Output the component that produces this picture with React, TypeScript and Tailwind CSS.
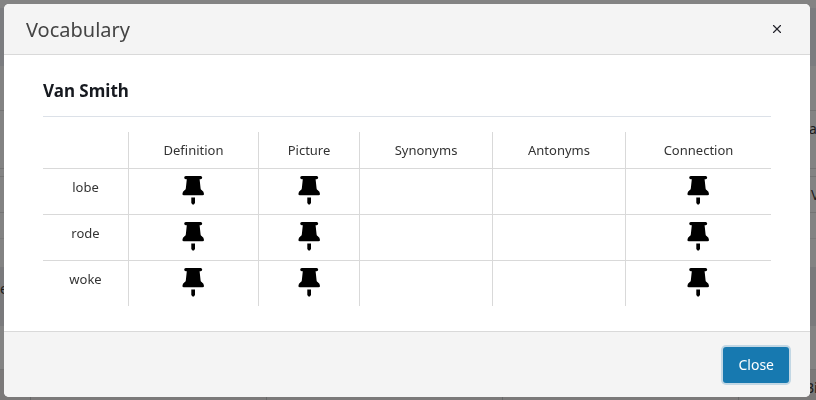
import { X } from 'lucide-react'

interface VocabularyRow {
  word: string
  pins: boolean[]
}

const columns = [
  { label: 'Definition', width: 'w-[130px]' },
  { label: 'Picture', width: 'w-[101px]' },
  { label: 'Synonyms', width: 'w-[133px]' },
  { label: 'Antonyms', width: 'w-[133px]' },
  { label: 'Connection', width: 'w-[145px]' },
]

const rows: VocabularyRow[] = [
  { word: 'lobe', pins: [true, true, false, false, true] },
  { word: 'rode', pins: [true, true, false, false, true] },
  { word: 'woke', pins: [true, true, false, false, true] },
]

function PinIcon() {
  return (
    <svg viewBox="0 0 23 30" className="mx-auto h-[30px] w-[23px] text-black" fill="currentColor" role="img" aria-label="Pinned">
      <path d="M3.800 1h14.800q1.600 0 1.600 1.600t-1.600 1.600h-1l1 9.200q.1 1 1 1.500 2.400 1.500 2.400 4.100 0 1.300-1.500 1.300H1.900q-1.500 0-1.500-1.300 0-2.600 2.400-4.100.9-.5 1-1.500l1-9.200h-1q-1.600 0-1.600-1.600T3.800 1z" />
      <path d="M9.300 22.400h3.700v5.200q-.3 2.100-1.850 2.100t-1.850-2.100z" />
    </svg>
  )
}

// The page that stays dimmed behind the dialog
function PageBehind() {
  return (
    <div className="flex h-screen flex-col overflow-hidden bg-[#838383] text-sm leading-5 text-[#1c1c1c]" aria-hidden="true">
      <div className="h-2 shrink-0" />
      <div className="h-[58px] shrink-0 bg-[#7b7c7f]" />
      <div className="h-[45px] shrink-0 border-b border-[#747474]" />
      <div className="flex h-[58px] shrink-0 items-start justify-end border-b border-[#747474] pt-2">
        <span className="w-[7px]">a</span>
      </div>
      <div className="mt-[7px] flex h-[37px] shrink-0 items-center justify-end border-y border-[#747474]">
        <span className="w-[5px]">V</span>
      </div>
      <div className="h-[26px] shrink-0 border-b border-[#7a7a7a]" />
      <div className="mt-7 h-[59px] shrink-0 bg-[#7a7a7c] pt-3">e</div>
      <div className="h-11 shrink-0 border-b border-[#747474]" />
      <div className="grid h-[30px] shrink-0 grid-cols-[31px_236px_236px_236px_1fr] bg-[#7b7979] *:border-r *:border-[#686868]">
        <div />
        <div />
        <div />
        <div />
        <div className="flex justify-end border-r-0! pt-2">
          <span className="w-[11px]">Bi</span>
        </div>
      </div>
    </div>
  )
}

export default function App() {
  return (
    <div className="font-['Noto_Sans','Open_Sans',sans-serif]">
      <PageBehind />
      <div className="fixed inset-0 pt-1 pr-[6px] pl-1">
        <div
          role="dialog"
          aria-modal="true"
          aria-labelledby="dialog-title"
          className="overflow-hidden rounded-[5px] bg-white text-[13px] text-[#333]"
        >
          <header className="flex h-[51px] items-center justify-between border-b border-[#d9d9d9] bg-[#f4f4f4] pr-[26px] pl-[22px]">
            <h1 id="dialog-title" className="pt-[2px] text-xl text-[#444]">Vocabulary</h1>
            <button type="button" aria-label="Close dialog" className="text-[#24242c]">
              <X className="h-[14px] w-[14px]" />
            </button>
          </header>

          <main className="pt-6 pr-[39px] pb-[25px] pl-[39px]">
            <h2 className="border-b border-[#dce1e8] pb-[13px] text-[17px] leading-6 font-bold text-[#16191f]">
              Van Smith
            </h2>
            <table className="mt-[15px] w-full table-fixed border-separate border-spacing-0 text-center">
              <thead>
                <tr className="h-[37px]">
                  <td className="w-[86px] border-r border-b border-[#d9d9d9]" />
                  {columns.map((column) => (
                    <th
                      key={column.label}
                      scope="col"
                      className={`${column.width} border-r border-b border-[#d9d9d9] pt-[2px] font-normal last:border-r-0`}
                    >
                      {column.label}
                    </th>
                  ))}
                </tr>
              </thead>
              <tbody className="[&>tr:last-child>*]:border-b-0">
                {rows.map((row) => (
                  <tr key={row.word} className="h-[46px] last:h-[45px]">
                    <th scope="row" className="border-r border-b border-[#d9d9d9] pt-[9px] align-top font-normal">
                      {row.word}
                    </th>
                    {row.pins.map((pinned, i) => (
                      <td key={columns[i].label} className="border-r border-b border-[#d9d9d9] pt-[6px] align-top last:border-r-0">
                        {pinned && <PinIcon />}
                      </td>
                    ))}
                  </tr>
                ))}
              </tbody>
            </table>
          </main>

          <footer className="flex h-[66px] items-center justify-end border-t border-[#d9d9d9] bg-[#f4f4f4] pr-[21px]">
            <button
              type="button"
              className="h-9 rounded-[3px] bg-[#1779b0] px-[15px] text-sm text-white ring-2 ring-[#c2d7e4]"
            >
              Close
            </button>
          </footer>
        </div>
      </div>
    </div>
  )
}
